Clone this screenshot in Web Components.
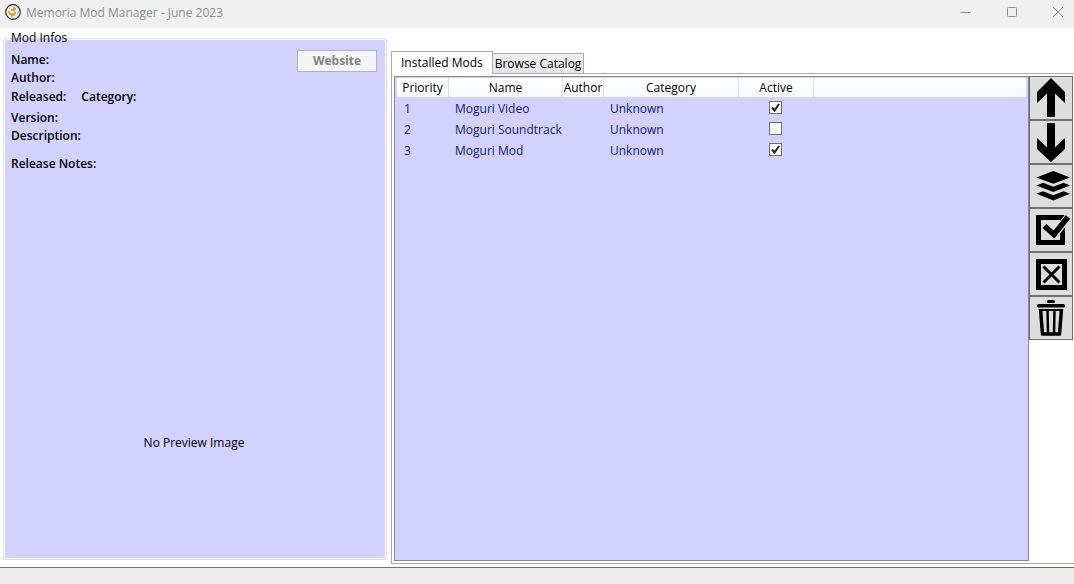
<!DOCTYPE html>
<html lang="en">
<head>
<meta charset="utf-8">
<title>Memoria Mod Manager - June 2023</title>
<style>
  html, body { margin: 0; height: 100%; }
  body {
    font: 12px/18px "Open Sans", "Noto Sans", sans-serif;
    color: #000; background: #fff;
    --panel: #d3d1ff; --line: #acacac; --ink: #0c1c6c;
  }
</style>
</head>
<body>
<mod-manager></mod-manager>
<script>
const define = (name, html, setup) => customElements.define(name, class extends HTMLElement {
  constructor() {
    super();
    this.attachShadow({ mode: "open" }).innerHTML = html;
  }
  connectedCallback() { if (setup) setup(this, this.shadowRoot); }
});

define("title-bar", `
<style>
  :host { display: flex; align-items: center; height: 28px; padding: 0 0 0 5px; background: #f0f0f0; color: #8e8e8e; }
  h1 { flex: 1; margin: 0; padding: 0 0 2px 5px; font: inherit; }
  .logo { width: 16px; height: 16px; margin-bottom: 4px; }
  nav { display: flex; gap: 14px; padding-bottom: 4px; }
  button { width: 32px; height: 24px; padding: 0; border: 0; background: none; color: inherit; display: grid; place-items: center; }
</style>
<svg class="logo" viewBox="0 0 16 16" aria-hidden="true">
  <circle cx="8" cy="8" r="7.300" fill="#faf7f2" stroke="#2e2825" stroke-width="1.200"/>
  <path d="M3 7h2v2h2v-2h-1v-2h2v-2h2v1h1v2h-1v2h1v2h-1v2h-2v1h-2v-2h-2v-2h-1z" fill="#e0a04c"/>
  <path d="M7 7h2v2h-2z" fill="#fff1c0"/>
  <path d="M12.500 7v3M4 4.500h1" stroke="#c9a678" fill="none"/>
</svg>
<h1><slot></slot></h1>
<nav>
  <button aria-label="Minimize"><svg width="12" height="12"><path d="M1 6.500H11" stroke="currentColor"/></svg></button>
  <button aria-label="Maximize"><svg width="12" height="12"><rect x="1.500" y="1.500" width="9" height="9" rx="1" fill="none" stroke="currentColor"/></svg></button>
  <button aria-label="Close"><svg width="12" height="12"><path d="M1 1l10 10M11 1L1 11" stroke="currentColor"/></svg></button>
</nav>`);

define("group-box", `
<style>
  :host { display: block; }
  fieldset { box-sizing: border-box; height: 100%; min-width: 0; margin: 0; padding: 3px 9px 0 7px; border: 1px solid #d5dfe5; border-radius: 4px;
    background: var(--panel); box-shadow: inset 0 0 0 1px #fff; display: flex; flex-direction: column; }
  legend { padding: 0 1px; margin-left: -1px; background: linear-gradient(transparent 50%, var(--panel) 50%); }
</style>
<fieldset><legend><slot name="caption"></slot></legend><slot></slot></fieldset>`);

define("mod-details", `
<style>
  :host { flex: 1; display: flex; flex-direction: column; }
  .top { display: flex; justify-content: space-between; align-items: flex-start; }
  .fields { font-weight: 600; padding-top: 1px; }
  .pair { display: flex; gap: 15px; height: 22px; line-height: 20px; }
  button { width: 80px; height: 22px; padding: 0; font: inherit; font-weight: 700; color: #838383; background: #f4f4f4; border: 1px solid #adb2b5; }
  .notes { flex: 2; padding-top: 10px; font-weight: 600; }
  .preview { flex: 3; display: grid; place-items: center; padding-top: 16px; }
</style>
<div class="top">
  <div class="fields">
    <div>Name:</div>
    <div>Author:</div>
    <div class="pair"><span>Released:</span><span>Category:</span></div>
    <div>Version:</div>
    <div>Description:</div>
  </div>
  <button disabled>Website</button>
</div>
<div class="notes">Release Notes:</div>
<div class="preview">No Preview Image</div>`);

define("tab-view", `
<style>
  :host { display: flex; flex-direction: column; min-width: 0; }
  .tabs { display: flex; align-items: flex-end; }
  button { font: inherit; color: #000; height: 20px; padding: 0 2px; border: 1px solid var(--line); border-width: 1px 1px 0 0; background: linear-gradient(#f0f0f0, #e5e5e5); }
  button[aria-selected=true] { height: 23px; padding: 0 9px; border-left-width: 1px; margin-bottom: -1px; background: #fff; position: relative; }
  .body { flex: 1; display: flex; border: 1px solid var(--line); border-right: 0; padding: 2px 1px 2px 2px; }
</style>
<div class="tabs" role="tablist">
  <button role="tab" aria-selected="true">Installed Mods</button>
  <button role="tab" aria-selected="false">Browse Catalog</button>
</div>
<div class="body" role="tabpanel"><slot></slot></div>`);

define("mod-list", `
<style>
  :host { flex: 1; min-width: 0; border: 1px solid #828790; background: var(--panel); padding: 1px 2px; }
  table { width: 100%; table-layout: fixed; border-collapse: separate; border-spacing: 0; }
  th { box-sizing: border-box; height: 20px; padding: 0; font-weight: 400; background: linear-gradient(#fff 40%, #f6f7f9); border-right: 1px solid #dfdfe3; border-bottom: 1px solid #d9d9e5; white-space: nowrap; }
  th:last-child { border-right: 0; }
  td { height: 21px; padding: 0 0 0 6px; color: var(--ink); white-space: nowrap; }
  td.num { padding-left: 7px; }
  td.tick { padding: 0 2px 0 0; line-height: 0; text-align: center; }
  input { appearance: none; width: 13px; height: 13px; margin: 0 0 2px; border: 1px solid #707070; background: #fff; vertical-align: middle; }
  input:checked { background: #fff url("data:image/svg+xml,%3Csvg xmlns='http://www.w3.org/2000/svg' viewBox='0 0 11 11'%3E%3Cpath d='M2 5.500L4.500 8.500L9 2' fill='none' stroke='%23212121' stroke-width='2'/%3E%3C/svg%3E"); }
</style>
<table>
  <colgroup><col style="width:52px"><col style="width:114px"><col style="width:41px"><col style="width:135px"><col style="width:75px"><col></colgroup>
  <thead><tr><th>Priority</th><th>Name</th><th>Author</th><th>Category</th><th>Active</th><th></th></tr></thead>
  <tbody></tbody>
</table>`, (host, root) => {
  const mods = [["Moguri Video", true], ["Moguri Soundtrack", false], ["Moguri Mod", true]];
  root.querySelector("tbody").innerHTML = mods.map(([name, on], i) =>
    `<tr><td class="num">${i + 1}</td><td>${name}</td><td></td><td>Unknown</td>
     <td class="tick"><input type="checkbox" aria-label="${name} active"${on ? " checked" : ""}></td><td></td></tr>`).join("");
});

const icons = {
  up: `<path d="M21 1L35 15V26L25 16.500V40H17V16.500L7 26V15Z"/>`,
  down: `<path d="M21 41L35 28V17L25 26.500V2H17V26.500L7 17V28Z"/>`,
  layers: `<path d="M23.300 6L40 12.500L23.300 18.800L6.500 12.500Z"/>
    <path d="M6.500 20.500L13 17.800L23.300 21.800L33.600 17.800L40 20.500L23.300 27Z"/>
    <path d="M6.500 28.800L13 26.200L23.300 30.200L33.600 26.200L40 28.800L23.300 35.500Z"/>`,
  check: `<path fill-rule="evenodd" d="M6 6H35V36H6ZM11 11V31H30V11Z"/>
    <path d="M13 15L24 25.500L39 7" fill="none" stroke="#ddd" stroke-width="8"/>
    <path d="M6 6H11V36H6ZM6 31H35V36H6Z"/>
    <path d="M14.500 17L24 25.500L38 8" fill="none" stroke="#000" stroke-width="5.500"/>`,
  cross: `<path fill-rule="evenodd" d="M6 6H37V37H6ZM11 11V32H32V11Z"/>
    <path d="M13.500 13.500L29.500 29.500M29.500 13.500L13.500 29.500" fill="none" stroke="#000" stroke-width="3"/>`,
  trash: `<rect x="17" y="3" width="8" height="3" rx="1.500"/><rect x="7" y="7" width="28" height="3.500" rx="1.500"/>
    <path d="M10.500 12L12.500 37H29.500L31.500 12" fill="none" stroke="#000" stroke-width="3.500" stroke-linejoin="round"/>
    <path d="M17.500 13L18 36M24.500 13L24 36" fill="none" stroke="#000" stroke-width="2.500"/><path d="M9 12H33V14H9Z"/>`
};
define("tool-button", `
<style>
  :host { display: block; }
  button { display: block; width: 44px; height: 44px; padding: 0; border: 1px solid #707070; background: #ddd; }
  svg { display: block; width: 42px; height: 42px; }
</style>
<button><svg viewBox="0 0 42 42" aria-hidden="true"></svg></button>`, (host, root) => {
  root.querySelector("svg").innerHTML = icons[host.getAttribute("icon")];
  root.querySelector("button").setAttribute("aria-label", host.getAttribute("label"));
});

define("status-bar", `<style>:host { display: block; height: 16px; border-top: 1px solid #707070; background: #efebea; }</style>`);

define("mod-manager", `
<style>
  :host { display: flex; flex-direction: column; min-height: 100%; }
  main { flex: 1; display: grid; grid-template-columns: 384fr 683fr; column-gap: 4px; padding: 0 0 3px 3px; }
  group-box { margin: 1px 0 4px; }
  tab-view { padding-top: 23px; }
</style>
<title-bar>Memoria Mod Manager - June 2023</title-bar>
<main>
  <group-box><span slot="caption">Mod Infos</span><mod-details></mod-details></group-box>
  <tab-view>
    <mod-list></mod-list>
    <aside>
      <tool-button icon="up" label="Move up"></tool-button>
      <tool-button icon="down" label="Move down"></tool-button>
      <tool-button icon="layers" label="Reorder"></tool-button>
      <tool-button icon="check" label="Activate all"></tool-button>
      <tool-button icon="cross" label="Deactivate all"></tool-button>
      <tool-button icon="trash" label="Uninstall"></tool-button>
    </aside>
  </tab-view>
</main>
<status-bar></status-bar>`);
</script>
</body>
</html>
